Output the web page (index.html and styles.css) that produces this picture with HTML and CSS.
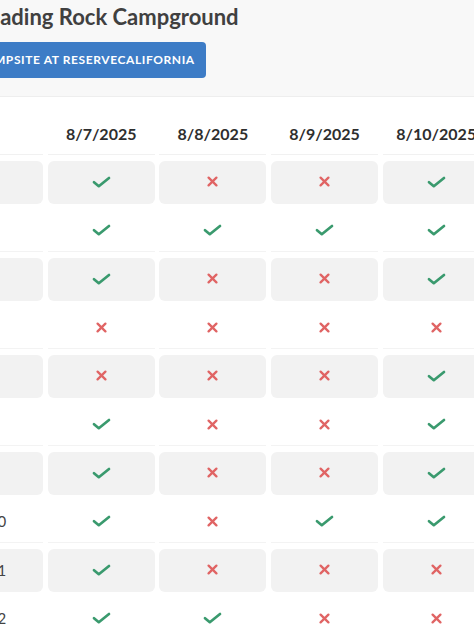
FILE: index.html
```html
<!DOCTYPE html>
<html lang="en">
<head>
<meta charset="utf-8">
<title>Reading Rock Campground</title>
<link rel="stylesheet" href="styles.css">
</head>
<body>
<div class="page">
  <header class="hero">
    <h1 class="title">Reading Rock Campground</h1>
    <a class="book" href="#">Book campsite at ReserveCalifornia</a>
  </header>

  <div class="grid">
    <div class="head"></div>
    <div class="head">8/7/2025</div>
    <div class="head">8/8/2025</div>
    <div class="head">8/9/2025</div>
    <div class="head">8/10/2025</div>

    <div class="cell label shade">Site 3</div>
    <div class="cell shade"><svg class="ok" viewBox="0 0 19 12"><path d="M2 6.2l4.8 4L17 2"/></svg></div>
    <div class="cell shade"><svg class="no" viewBox="0 0 11 11"><path d="M1.6 1.6l7.8 7.8M9.4 1.6l-7.8 7.8"/></svg></div>
    <div class="cell shade"><svg class="no" viewBox="0 0 11 11"><path d="M1.6 1.6l7.8 7.8M9.4 1.6l-7.8 7.8"/></svg></div>
    <div class="cell shade"><svg class="ok" viewBox="0 0 19 12"><path d="M2 6.2l4.8 4L17 2"/></svg></div>

    <div class="cell label">Site 4</div>
    <div class="cell"><svg class="ok" viewBox="0 0 19 12"><path d="M2 6.2l4.8 4L17 2"/></svg></div>
    <div class="cell"><svg class="ok" viewBox="0 0 19 12"><path d="M2 6.2l4.8 4L17 2"/></svg></div>
    <div class="cell"><svg class="ok" viewBox="0 0 19 12"><path d="M2 6.2l4.8 4L17 2"/></svg></div>
    <div class="cell"><svg class="ok" viewBox="0 0 19 12"><path d="M2 6.2l4.8 4L17 2"/></svg></div>

    <div class="cell label shade">Site 5</div>
    <div class="cell shade"><svg class="ok" viewBox="0 0 19 12"><path d="M2 6.2l4.8 4L17 2"/></svg></div>
    <div class="cell shade"><svg class="no" viewBox="0 0 11 11"><path d="M1.6 1.6l7.8 7.8M9.4 1.6l-7.8 7.8"/></svg></div>
    <div class="cell shade"><svg class="no" viewBox="0 0 11 11"><path d="M1.6 1.6l7.8 7.8M9.4 1.6l-7.8 7.8"/></svg></div>
    <div class="cell shade"><svg class="ok" viewBox="0 0 19 12"><path d="M2 6.2l4.8 4L17 2"/></svg></div>

    <div class="cell label">Site 6</div>
    <div class="cell"><svg class="no" viewBox="0 0 11 11"><path d="M1.6 1.6l7.8 7.8M9.4 1.6l-7.8 7.8"/></svg></div>
    <div class="cell"><svg class="no" viewBox="0 0 11 11"><path d="M1.6 1.6l7.8 7.8M9.4 1.6l-7.8 7.8"/></svg></div>
    <div class="cell"><svg class="no" viewBox="0 0 11 11"><path d="M1.6 1.6l7.8 7.8M9.4 1.6l-7.8 7.8"/></svg></div>
    <div class="cell"><svg class="no" viewBox="0 0 11 11"><path d="M1.6 1.6l7.8 7.8M9.4 1.6l-7.8 7.8"/></svg></div>

    <div class="cell label shade">Site 7</div>
    <div class="cell shade"><svg class="no" viewBox="0 0 11 11"><path d="M1.6 1.6l7.8 7.8M9.4 1.6l-7.8 7.8"/></svg></div>
    <div class="cell shade"><svg class="no" viewBox="0 0 11 11"><path d="M1.6 1.6l7.8 7.8M9.4 1.6l-7.8 7.8"/></svg></div>
    <div class="cell shade"><svg class="no" viewBox="0 0 11 11"><path d="M1.6 1.6l7.8 7.8M9.4 1.6l-7.8 7.8"/></svg></div>
    <div class="cell shade"><svg class="ok" viewBox="0 0 19 12"><path d="M2 6.2l4.8 4L17 2"/></svg></div>

    <div class="cell label">Site 8</div>
    <div class="cell"><svg class="ok" viewBox="0 0 19 12"><path d="M2 6.2l4.8 4L17 2"/></svg></div>
    <div class="cell"><svg class="no" viewBox="0 0 11 11"><path d="M1.6 1.6l7.8 7.8M9.4 1.6l-7.8 7.8"/></svg></div>
    <div class="cell"><svg class="no" viewBox="0 0 11 11"><path d="M1.6 1.6l7.8 7.8M9.4 1.6l-7.8 7.8"/></svg></div>
    <div class="cell"><svg class="ok" viewBox="0 0 19 12"><path d="M2 6.2l4.8 4L17 2"/></svg></div>

    <div class="cell label shade">Site 9</div>
    <div class="cell shade"><svg class="ok" viewBox="0 0 19 12"><path d="M2 6.2l4.8 4L17 2"/></svg></div>
    <div class="cell shade"><svg class="no" viewBox="0 0 11 11"><path d="M1.6 1.6l7.8 7.8M9.4 1.6l-7.8 7.8"/></svg></div>
    <div class="cell shade"><svg class="no" viewBox="0 0 11 11"><path d="M1.6 1.6l7.8 7.8M9.4 1.6l-7.8 7.8"/></svg></div>
    <div class="cell shade"><svg class="ok" viewBox="0 0 19 12"><path d="M2 6.2l4.8 4L17 2"/></svg></div>

    <div class="cell label">Site 10</div>
    <div class="cell"><svg class="ok" viewBox="0 0 19 12"><path d="M2 6.2l4.8 4L17 2"/></svg></div>
    <div class="cell"><svg class="no" viewBox="0 0 11 11"><path d="M1.6 1.6l7.8 7.8M9.4 1.6l-7.8 7.8"/></svg></div>
    <div class="cell"><svg class="ok" viewBox="0 0 19 12"><path d="M2 6.2l4.8 4L17 2"/></svg></div>
    <div class="cell"><svg class="ok" viewBox="0 0 19 12"><path d="M2 6.2l4.8 4L17 2"/></svg></div>

    <div class="cell label shade">Site 11</div>
    <div class="cell shade"><svg class="ok" viewBox="0 0 19 12"><path d="M2 6.2l4.8 4L17 2"/></svg></div>
    <div class="cell shade"><svg class="no" viewBox="0 0 11 11"><path d="M1.6 1.6l7.8 7.8M9.4 1.6l-7.8 7.8"/></svg></div>
    <div class="cell shade"><svg class="no" viewBox="0 0 11 11"><path d="M1.6 1.6l7.8 7.8M9.4 1.6l-7.8 7.8"/></svg></div>
    <div class="cell shade"><svg class="no" viewBox="0 0 11 11"><path d="M1.6 1.6l7.8 7.8M9.4 1.6l-7.8 7.8"/></svg></div>

    <div class="cell label">Site 12</div>
    <div class="cell"><svg class="ok" viewBox="0 0 19 12"><path d="M2 6.2l4.8 4L17 2"/></svg></div>
    <div class="cell"><svg class="ok" viewBox="0 0 19 12"><path d="M2 6.2l4.8 4L17 2"/></svg></div>
    <div class="cell"><svg class="no" viewBox="0 0 11 11"><path d="M1.6 1.6l7.8 7.8M9.4 1.6l-7.8 7.8"/></svg></div>
    <div class="cell"><svg class="no" viewBox="0 0 11 11"><path d="M1.6 1.6l7.8 7.8M9.4 1.6l-7.8 7.8"/></svg></div>
  </div>
</div>
</body>
</html>
```

FILE: styles.css
```css
html, body {
  margin: 0;
  padding: 0;
  background: #ffffff;
  overflow: hidden;
}

body {
  font-family: Lato, "Open Sans", "Liberation Sans", sans-serif;
  color: #3b3b3b;
}

.page {
  width: 600px;
  margin-left: -100px;
}

.hero {
  background: #f8f8f8;
  border-bottom: 1px solid #eeeeee;
  padding: 4px 0 18px 24px;
  display: flex;
  flex-direction: column;
  align-items: flex-start;
}

.title {
  margin: 0 0 12px 51px;
  font-size: 22px;
  line-height: 26px;
  font-weight: 700;
  color: #404040;
}

.book {
  display: inline-block;
  background: #3d7cc6;
  color: #ffffff;
  text-decoration: none;
  text-transform: uppercase;
  font-size: 12px;
  font-weight: 700;
  letter-spacing: 0.6px;
  line-height: 36px;
  padding: 0 11px;
  border-radius: 4px;
}

.grid {
  display: grid;
  grid-template-columns: 100px repeat(4, 107px);
  grid-template-rows: 43px;
  grid-auto-rows: 43px;
  column-gap: 4.7px;
  row-gap: 5.56px;
  margin: 15px 0 0 43px;
}

.head {
  display: flex;
  align-items: center;
  justify-content: center;
  font-size: 16px;
  font-weight: 700;
  color: #2e2e2e;
  border-bottom: 1px solid #f1f1f1;
}

.cell {
  display: flex;
  align-items: center;
  justify-content: center;
  border-bottom: 1px solid #f3f3f3;
}

.cell.shade {
  background: #f2f2f2;
  border-bottom-color: transparent;
  border-radius: 6px;
}

.label {
  justify-content: flex-start;
  padding-left: 17px;
  font-size: 15px;
  color: #444444;
}

.ok {
  width: 19px;
  height: 12px;
  fill: none;
  stroke: #3a9a6e;
  stroke-width: 2.7;
  stroke-linecap: round;
  stroke-linejoin: round;
}

.no {
  width: 11px;
  height: 11px;
  fill: none;
  stroke: #e06464;
  stroke-width: 2.3;
  stroke-linecap: round;
}
```
